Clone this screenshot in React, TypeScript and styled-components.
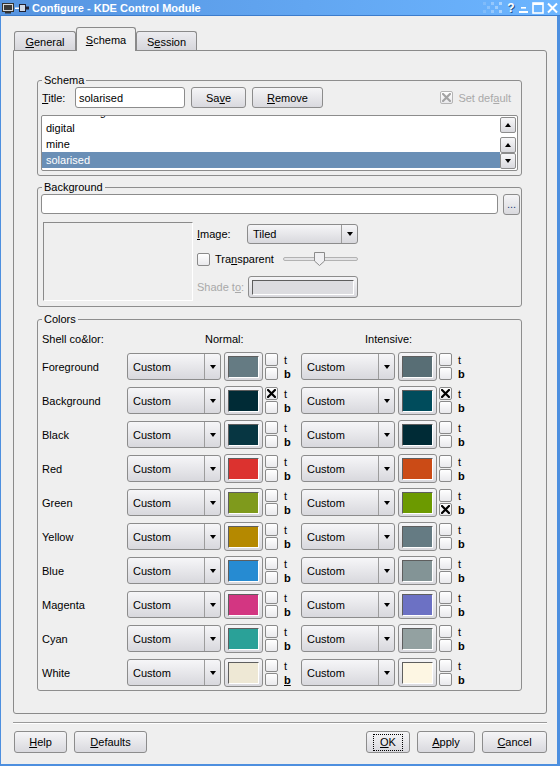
import React from "react";
import styled, { createGlobalStyle } from "styled-components";

const GlobalStyle = createGlobalStyle`
  html, body { margin: 0; padding: 0; }
  body {
    font-family: "Liberation Sans", Arial, sans-serif;
    font-size: 11px;
    color: #000;
    background: #efefef;
  }
  * { box-sizing: border-box; }
`;

const Window = styled.div`
  width: 560px;
  height: 766px;
  display: flex;
  flex-direction: column;
  background: #4d8fdf;
`;

const TitleBar = styled.div`
  height: 16px;
  flex: none;
  display: flex;
  align-items: center;
  padding: 0 2px 0 2px;
  background: linear-gradient(to right, #5694e0, #6cb5ff);
  border-bottom: 1px solid #3c7ccc;
  color: #fff;
  font-weight: bold;
  font-size: 11px;
`;

const TitleText = styled.span`
  margin-left: 2px;
  white-space: nowrap;
`;

const TitleSpacer = styled.div`
  flex: 1;
`;

const TitleButtons = styled.div`
  display: flex;
  align-items: center;
  gap: 3px;
`;

const HelpGlyph = styled.span`
  font-weight: bold;
  font-size: 12px;
  width: 10px;
  text-align: center;
  color: #fff;
  text-shadow: 1px 1px 0 #27538a;
`;

const Body = styled.div`
  flex: 1;
  display: flex;
  flex-direction: column;
  background: #efefef;
  margin: 0 3px 2px 1px;
  padding: 11px 10px 11px 12px;
`;

const TabBar = styled.div`
  height: 24px;
  margin-bottom: -1px;
  display: flex;
  align-items: flex-end;
  padding-left: 1px;
  position: relative;
  z-index: 1;
`;

const Tab = styled.div<{ $active?: boolean; $w: number }>`
  width: ${(p) => p.$w}px;
  height: ${(p) => (p.$active ? 24 : 19)}px;
  margin-bottom: ${(p) => (p.$active ? 0 : 1)}px;
  display: flex;
  align-items: center;
  justify-content: center;
  border: 1px solid #8a8a8a;
  border-bottom: none;
  border-radius: 3px 3px 0 0;
  background: ${(p) =>
    p.$active ? "#efefef" : "linear-gradient(#ececf0, #d6d6db)"};
  padding-top: ${(p) => (p.$active ? 0 : 1)}px;
`;

const Panel = styled.div`
  flex: 1;
  display: flex;
  flex-direction: column;
  border: 1px solid #8a8a8a;
  border-radius: 0 3px 3px 3px;
  padding: 23px 24px 0 23px;
`;

const Group = styled.fieldset<{ $mt?: number; $pb?: number }>`
  margin: ${(p) => p.$mt ?? 0}px 0 0 0;
  border: 1px solid #8e8e8e;
  border-radius: 3px;
  padding: 0 3px ${(p) => p.$pb ?? 4}px 3px;
  min-inline-size: 0;
`;

const Legend = styled.legend`
  padding: 0 2px;
  margin-left: 1px;
  line-height: 13px;
  font-size: 11px;
`;

const Row = styled.div<{ $h: number; $mt?: number; $mr?: number }>`
  display: flex;
  align-items: center;
  height: ${(p) => p.$h}px;
  margin-top: ${(p) => p.$mt ?? 0}px;
  margin-right: ${(p) => p.$mr ?? 0}px;
`;

const Label = styled.span<{ $w?: number; $ml?: number; $disabled?: boolean }>`
  ${(p) => (p.$w ? `width: ${p.$w}px;` : "")}
  margin-left: ${(p) => p.$ml ?? 0}px;
  flex: none;
  white-space: nowrap;
  color: ${(p) => (p.$disabled ? "#a9a9a9" : "#000")};
`;

const TextInput = styled.div<{ $w?: number; $h: number }>`
  ${(p) => (p.$w ? `width: ${p.$w}px; flex: none;` : "flex: 1;")}
  height: ${(p) => p.$h}px;
  background: #fff;
  border: 1px solid #8c8c8c;
  border-radius: 3px;
  display: flex;
  align-items: center;
  padding-left: 3px;
`;

const Button = styled.div<{ $w: number; $h?: number; $ml?: number }>`
  width: ${(p) => p.$w}px;
  height: ${(p) => p.$h ?? 22}px;
  margin-left: ${(p) => p.$ml ?? 0}px;
  flex: none;
  display: flex;
  align-items: center;
  justify-content: center;
  border: 1px solid #8c8c8c;
  border-radius: 3px;
  background: linear-gradient(#f5f5f7, #d9d9de);
`;

const DotsText = styled.span`
  color: #1c3f7a;
  line-height: 10px;
`;

const FocusRect = styled.span`
  outline: 1px dotted #000;
  padding: 1px 6px;
  line-height: 13px;
`;

const Spacer = styled.div`
  flex: 1;
`;

const CheckBox = styled.div<{ $disabled?: boolean }>`
  width: 13px;
  height: 13px;
  flex: none;
  border: 1px solid ${(p) => (p.$disabled ? "#b4b4b4" : "#8a8a8a")};
  border-radius: 2px;
  background: linear-gradient(#ffffff, #e9e9ec);
  display: flex;
  align-items: center;
  justify-content: center;
`;

const Check = ({ on, disabled }: { on?: boolean; disabled?: boolean }) => (
  <CheckBox $disabled={disabled}>
    {on && (
      <svg width="9" height="9" viewBox="0 0 9 9">
        <path
          d="M1 1L8 8M8 1L1 8"
          stroke={disabled ? "#a4a4a4" : "#000"}
          strokeWidth="2.2"
          strokeLinecap="square"
        />
      </svg>
    )}
  </CheckBox>
);

const ListBox = styled.div`
  height: 56px;
  margin-top: 7px;
  display: flex;
  background: #fff;
  border: 1px solid #8c8c8c;
  border-radius: 2px;
  overflow: hidden;
`;

const ListItems = styled.div`
  flex: 1;
  overflow: hidden;
`;

const ListInner = styled.div`
  margin-top: -12px;
`;

const ListItem = styled.div<{ $selected?: boolean }>`
  height: 16px;
  line-height: 16px;
  padding-left: 4px;
  white-space: nowrap;
  background: ${(p) => (p.$selected ? "#6a8fb6" : "transparent")};
  color: ${(p) => (p.$selected ? "#fff" : "#000")};
`;

const ScrollCol = styled.div`
  width: 17px;
  display: flex;
  flex-direction: column;
  justify-content: space-between;
  padding: 1px 1px 1px 0;
`;

const ScrollBtn = styled.div`
  height: 16px;
  border: 1px solid #8c8c8c;
  border-radius: 2px;
  background: linear-gradient(#f7f7f9, #d9d9de);
  display: flex;
  align-items: center;
  justify-content: center;
`;

const ScrollLower = styled.div`
  display: flex;
  flex-direction: column;
`;

const TriDown = styled.span`
  width: 0;
  height: 0;
  border-left: 3.5px solid transparent;
  border-right: 3.5px solid transparent;
  border-top: 4px solid #000;
`;

const TriUp = styled.span`
  width: 0;
  height: 0;
  border-left: 3.5px solid transparent;
  border-right: 3.5px solid transparent;
  border-bottom: 4px solid #000;
`;

const Combo = styled.div<{ $w: number; $h: number }>`
  width: ${(p) => p.$w}px;
  height: ${(p) => p.$h}px;
  flex: none;
  display: flex;
  border: 1px solid #8c8c8c;
  border-radius: 3px;
  background: linear-gradient(#f6f6f8, #d8d8dd);
`;

const ComboText = styled.div`
  flex: 1;
  display: flex;
  align-items: center;
  padding-left: 5px;
`;

const ComboArrow = styled.div`
  width: 16px;
  border-left: 1px solid #9c9c9c;
  display: flex;
  align-items: center;
  justify-content: center;
`;

const Preview = styled.div`
  width: 150px;
  height: 79px;
  margin-left: 2px;
  flex: none;
  border: 1px solid;
  border-color: #8a8a8a #ffffff #ffffff #8a8a8a;
`;

const SideCol = styled.div`
  margin-left: 4px;
  display: flex;
  flex-direction: column;
  align-self: flex-start;
`;

const Slider = styled.div`
  width: 75px;
  height: 14px;
  display: flex;
  align-items: center;
  position: relative;
`;

const Groove = styled.div`
  flex: 1;
  height: 4px;
  border: 1px solid #b2b2b2;
  border-radius: 2px;
  background: #e4e4e6;
`;

const Handle = styled.svg`
  position: absolute;
  left: 31px;
  top: 0;
`;

const ColorBtn = styled.div<{ $w: number; $h: number; $ml?: number }>`
  width: ${(p) => p.$w}px;
  height: ${(p) => p.$h}px;
  margin-left: ${(p) => p.$ml ?? 0}px;
  flex: none;
  padding: 3px 3px 2px 3px;
  border: 1px solid #8c8c8c;
  border-radius: 3px;
  background: linear-gradient(#f5f5f7, #d9d9de);
`;

const Swatch = styled.div<{ $c: string }>`
  width: 100%;
  height: 100%;
  background: ${(p) => p.$c};
  border: 1px solid;
  border-color: #5e5e5e #ffffff #ffffff #5e5e5e;
`;

const ColorRows = styled.div`
  display: flex;
  flex-direction: column;
  gap: 5px;
  margin-top: 7px;
`;

const ColorRow = styled.div`
  display: flex;
  align-items: center;
  height: 29px;
`;

const CheckStack = styled.div`
  margin-left: 2px;
  display: flex;
  flex-direction: column;
  gap: 1px;
`;

const TbStack = styled.div`
  width: 17px;
  margin-left: 6px;
  display: flex;
  flex-direction: column;
  line-height: 14px;
`;

const BoldB = styled.span<{ $u?: boolean }>`
  font-weight: bold;
  text-decoration: ${(p) => (p.$u ? "underline" : "none")};
`;

const Separator = styled.div`
  height: 2px;
  margin: 8px 0 7px 0;
  border-top: 1px solid #9a9a9a;
  border-bottom: 1px solid #ffffff;
`;

const ButtonRow = styled.div`
  display: flex;
  align-items: center;
  height: 22px;
  padding-left: 1px;
`;

type ColorDef = {
  name: string;
  normal: string;
  intense: string;
  nt?: boolean;
  nb?: boolean;
  it?: boolean;
  ib?: boolean;
  ub?: boolean;
};

const colors: ColorDef[] = [
  { name: "Foreground", normal: "#657b83", intense: "#586e75" },
  { name: "Background", normal: "#002b36", intense: "#004c5c", nt: true, it: true },
  { name: "Black", normal: "#073642", intense: "#002b36" },
  { name: "Red", normal: "#dc322f", intense: "#cb4b16" },
  { name: "Green", normal: "#7f9a1c", intense: "#6c9a00", ib: true },
  { name: "Yellow", normal: "#b58900", intense: "#657b83" },
  { name: "Blue", normal: "#268bd2", intense: "#839496" },
  { name: "Magenta", normal: "#d33682", intense: "#6c71c4" },
  { name: "Cyan", normal: "#2aa198", intense: "#93a1a1" },
  { name: "White", normal: "#eee8d5", intense: "#fdf6e3", ub: true },
];

const ColorSet = ({ c, t, b, ub }: { c: string; t?: boolean; b?: boolean; ub?: boolean }) => (
  <>
    <Combo $w={94} $h={27}>
      <ComboText>Custom</ComboText>
      <ComboArrow>
        <TriDown />
      </ComboArrow>
    </Combo>
    <ColorBtn $w={39} $h={29} $ml={3}>
      <Swatch $c={c} />
    </ColorBtn>
    <CheckStack>
      <Check on={t} />
      <Check on={b} />
    </CheckStack>
    <TbStack>
      <span>t</span>
      <BoldB $u={ub}>b</BoldB>
    </TbStack>
  </>
);

const WinIcon = () => (
  <svg width="28" height="12" viewBox="0 0 28 12">
    <rect x="0.5" y="1.5" width="11" height="8" fill="#d8d8d8" stroke="#333" />
    <rect x="2" y="3" width="8" height="5" fill="#3a3a3a" />
    <rect x="3" y="10" width="6" height="1.5" fill="#333" />
    <rect x="13" y="5.5" width="5" height="1.5" fill="#fff" />
    <rect x="17.5" y="2.5" width="6" height="7" fill="#cfd8e6" stroke="#223" />
    <rect x="23" y="4.5" width="4" height="3" fill="#223" />
  </svg>
);

const Checker = () => (
  <svg width="20" height="12" viewBox="0 0 20 12">
    {[0, 1, 2, 3, 4].map((i) =>
      [0, 1, 2].map((j) =>
        (i + j) % 2 === 0 ? (
          <rect key={`${i}-${j}`} x={i * 4} y={j * 4} width="3" height="3" fill="#fff" opacity={0.15 + i * 0.07} />
        ) : null
      )
    )}
  </svg>
);

const MinIcon = () => (
  <svg width="10" height="12" viewBox="0 0 10 12">
    <rect x="2" y="5" width="5" height="1.6" fill="#fff" />
    <rect x="0" y="9" width="9" height="2" fill="#fff" />
  </svg>
);

const MaxIcon = () => (
  <svg width="12" height="12" viewBox="0 0 12 12">
    <rect x="1" y="1" width="10" height="10" fill="none" stroke="#fff" strokeWidth="1.6" />
    <rect x="1" y="1" width="10" height="2" fill="#fff" />
  </svg>
);

const CloseIcon = () => (
  <svg width="11" height="12" viewBox="0 0 11 12">
    <path d="M1 1.5L10 10.5M10 1.5L1 10.5" stroke="#fff" strokeWidth="2" />
  </svg>
);

export default function App() {
  return (
    <>
      <GlobalStyle />
      <Window>
        <TitleBar>
          <WinIcon />
          <TitleText>Configure - KDE Control Module</TitleText>
          <TitleSpacer />
          <TitleButtons>
            <Checker />
            <HelpGlyph>?</HelpGlyph>
            <MinIcon />
            <MaxIcon />
            <CloseIcon />
          </TitleButtons>
        </TitleBar>
        <Body>
          <TabBar>
            <Tab $w={62}>
              <span>
                <u>G</u>eneral
              </span>
            </Tab>
            <Tab $w={60} $active>
              <span>
                <u>S</u>chema
              </span>
            </Tab>
            <Tab $w={61}>
              <span>
                S<u>e</u>ssion
              </span>
            </Tab>
          </TabBar>
          <Panel>
            <Group>
              <Legend>Schema</Legend>
              <Row $h={21}>
                <Label $w={33} $ml={1}>
                  <u>T</u>itle:
                </Label>
                <TextInput $w={110} $h={21}>
                  solarised
                </TextInput>
                <Button $w={55} $h={21} $ml={6}>
                  <span>
                    Sa<u>v</u>e
                  </span>
                </Button>
                <Button $w={71} $h={21} $ml={6}>
                  <span>
                    <u>R</u>emove
                  </span>
                </Button>
                <Spacer />
                <Check on disabled />
                <Label $ml={5} $disabled>
                  Set def<u>a</u>ult
                </Label>
                <Label $w={7} />
              </Row>
              <ListBox>
                <ListItems>
                  <ListInner>
                    <ListItem>Black on Light Color</ListItem>
                    <ListItem>digital</ListItem>
                    <ListItem>mine</ListItem>
                    <ListItem $selected>solarised</ListItem>
                  </ListInner>
                </ListItems>
                <ScrollCol>
                  <ScrollBtn>
                    <TriUp />
                  </ScrollBtn>
                  <ScrollLower>
                    <ScrollBtn>
                      <TriUp />
                    </ScrollBtn>
                    <ScrollBtn>
                      <TriDown />
                    </ScrollBtn>
                  </ScrollLower>
                </ScrollCol>
              </ListBox>
            </Group>

            <Group $mt={5} $pb={5}>
              <Legend>Background</Legend>
              <Row $h={20} $mr={-2}>
                <TextInput $h={20} />
                <Button $w={17} $h={21} $ml={5}>
                  <DotsText>...</DotsText>
                </Button>
              </Row>
              <Row $h={79} $mt={8}>
                <Preview />
                <SideCol>
                  <Row $h={20} $mt={2}>
                    <Label $w={50}>
                      <u>I</u>mage:
                    </Label>
                    <Combo $w={111} $h={20}>
                      <ComboText>Tiled</ComboText>
                      <ComboArrow>
                        <TriDown />
                      </ComboArrow>
                    </Combo>
                  </Row>
                  <Row $h={14} $mt={8}>
                    <Check />
                    <Label $w={68} $ml={5}>
                      Tra<u>n</u>sparent
                    </Label>
                    <Slider>
                      <Groove />
                      <Handle width="11" height="14" viewBox="0 0 11 14">
                        <path d="M0.5 0.5H10.5V9L5.5 13.5L0.5 9Z" fill="#f0f0f2" stroke="#8a8a8a" />
                      </Handle>
                    </Slider>
                  </Row>
                  <Row $h={22} $mt={10}>
                    <Label $w={51} $disabled>
                      Shade t<u>o</u>:
                    </Label>
                    <ColorBtn $w={110} $h={22}>
                      <Swatch $c="#dcdce0" />
                    </ColorBtn>
                  </Row>
                </SideCol>
              </Row>
            </Group>

            <Group $mt={6} $pb={3}>
              <Legend>Colors</Legend>
              <Row $h={13} $mt={6}>
                <Label $w={163} $ml={1}>
                  Shell co&amp;lor:
                </Label>
                <Label $w={160}>Normal:</Label>
                <Label>Intensive:</Label>
              </Row>
              <ColorRows>
                {colors.map((c) => (
                  <ColorRow key={c.name}>
                    <Label $w={85} $ml={1}>
                      {c.name}
                    </Label>
                    <ColorSet c={c.normal} t={c.nt} b={c.nb} ub={c.ub} />
                    <ColorSet c={c.intense} t={c.it} b={c.ib} />
                  </ColorRow>
                ))}
              </ColorRows>
            </Group>
          </Panel>
          <Separator />
          <ButtonRow>
            <Button $w={53}>
              <span>
                <u>H</u>elp
              </span>
            </Button>
            <Button $w={73} $ml={7}>
              <span>
                <u>D</u>efaults
              </span>
            </Button>
            <Spacer />
            <Button $w={44}>
              <FocusRect>
                <u>O</u>K
              </FocusRect>
            </Button>
            <Button $w={58} $ml={7}>
              <span>
                <u>A</u>pply
              </span>
            </Button>
            <Button $w={65} $ml={7}>
              <span>
                <u>C</u>ancel
              </span>
            </Button>
          </ButtonRow>
        </Body>
      </Window>
    </>
  );
}
